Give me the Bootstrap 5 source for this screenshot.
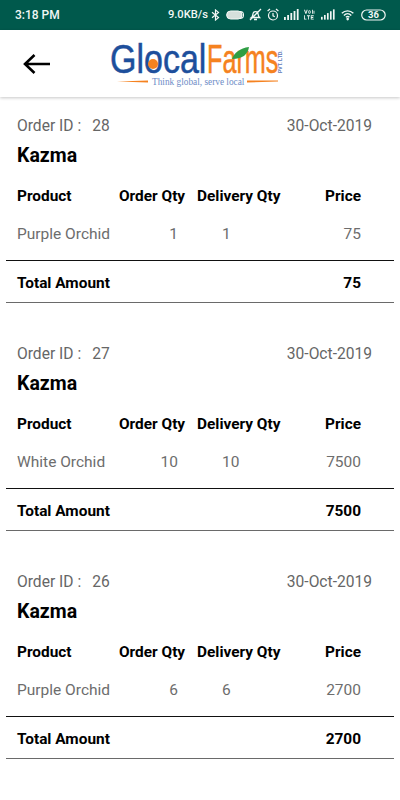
<!doctype html>
<html lang="en"><head><meta charset="utf-8"><meta name="viewport" content="width=device-width,initial-scale=1">
<title>Orders</title>
<link href="https://cdn.jsdelivr.net/npm/bootstrap@5.3.0/dist/css/bootstrap.min.css" rel="stylesheet">
<style>
html,body{height:800px;overflow:hidden;background:#fff}
body{font-family:Roboto,"Liberation Sans",sans-serif;color:#000;width:400px}
.sbar{height:30px;background:#00594c;color:#f2f7f5;font-weight:500;font-size:12px;padding:0 14px 0 15px}
.sbar svg{display:block}
.sicons{gap:5px}
.speed{font-size:11.2px;margin-right:-2px}
.gap6{margin-left:1px}
.topbar{height:67px;background:#fff;box-shadow:0 1px 3px rgba(0,0,0,.22);position:relative}
.backbtn{width:30px;margin-left:22px;margin-top:1px}
.brand{margin-left:57px}
.orderbox{height:228px;padding-top:18px}
.metarow{height:22px;padding:0 28px 0 17px;color:#666;font-size:15.6px;line-height:22px}
.idnum{margin-left:11px}
.placename{font-size:19.5px;font-weight:700;line-height:24px;padding-left:17px;margin-top:7px}
.cols{display:grid;grid-template-columns:102px 67px 11px 84px 80px;padding-left:17px;font-size:15.4px}
.cols>span{white-space:nowrap}
.headcols{font-weight:700;line-height:20px;margin-top:18px}
.valcols{color:#6d6d6d;font-size:15.5px;line-height:22px;margin-top:17px}
.cell-ord{text-align:right;padding-right:8px}
.cell-del{padding-left:25px}
.cell-pr{text-align:right}
.totalrow{margin:15px 6px 0;height:43px;border-top:1px solid #111;border-bottom:1px solid #6a6a6a;font-weight:700;font-size:15.4px;padding:4px 33px 0 11px}
</style></head>
<body>
<div class="sbar d-flex align-items-center justify-content-between">
  <span>3:18 PM</span>
  <div class="sicons d-flex align-items-center">
    <span class="speed">9.0KB/s</span>
    <svg width="9" height="12" viewBox="0 0 9 12" fill="none" stroke="#f2f7f5" stroke-width="1.2"><path d="M1 3.2l6.5 5.4L4.5 11V1l3 2.400L1 8.800"/></svg>
    <svg class="gap6" width="18" height="12" viewBox="0 0 18 12"><rect x=".6" y="2" width="15.500" height="8" rx="4" fill="#d5e0dc" stroke="#f2f7f5"/><path d="M14 2.500c2.500-.3 3.500 1.500 3.500 3.500s-1 3.500-3.500 3.500" stroke="#f2f7f5" stroke-width="1.100" fill="none"/></svg>
    <svg width="13" height="13" viewBox="0 0 13 13" fill="none" stroke="#f2f7f5" stroke-width="1.300"><path d="M2.500 9.500c1.500-1 1-3.500 2-5 1-1.300 3-1.300 4 0 .8 1.200.5 3.500 2 5zM5 11.500h3M1 12L12 1"/></svg>
    <svg width="12" height="13" viewBox="0 0 12 13" fill="none" stroke="#f2f7f5" stroke-width="1.200"><circle cx="6" cy="7.500" r="4.500"/><path d="M6 5v2.800l1.800 1M.6 3L3 1M11.400 3L9 1"/></svg>
    <svg width="15" height="11" viewBox="0 0 15 11" fill="#f2f7f5"><rect x="0" y="8" width="1.800" height="3"/><rect x="3.200" y="6" width="1.800" height="5"/><rect x="6.400" y="4" width="1.800" height="7"/><rect x="9.600" y="2" width="1.800" height="9"/><rect x="12.800" y="0" width="1.800" height="11"/></svg>
    <svg width="11" height="13" viewBox="0 0 13 13" fill="#f2f7f5"><path d="M0 1h1.200l1 3 1-3h1.200l-1.600 4.600H1.600zM5 3.600a1.500 2 0 1 1 3 0 1.500 2 0 1 1-3 0zm1 0a.5 1.200 0 1 0 1 0 .5 1.200 0 1 0-1 0zM9.500 1h1v4.600h-1zM11.300 2h1v3.600h-1zM0 7.500h1v4h2v1H0zM3.500 7.500h3.500v1H5.800v4h-1v-4H3.500zM8 7.500h3.500v1H9v1h2v1H9v1h2.500v1H8z"/></svg>
    <svg class="gap6" width="14" height="11" viewBox="0 0 15 11" fill="#f2f7f5"><rect x="0" y="8" width="1.800" height="3"/><rect x="3.200" y="6" width="1.800" height="5"/><rect x="6.400" y="4" width="1.800" height="7"/><rect x="9.600" y="2" width="1.800" height="9"/><rect x="12.800" y="0" width="1.800" height="11"/></svg>
    <svg class="gap6" width="14" height="12" viewBox="0 0 17 13" fill="none" stroke="#f2f7f5" stroke-width="1.700"><path d="M1 4.500c4-4 10-4 14 0M3.500 7c2.600-2.600 6.400-2.600 9 0M6 9.300c1.200-1.200 3-1.200 4.200 0"/><circle cx="8.100" cy="11.500" r=".7" fill="#f2f7f5"/></svg>
    <svg class="gap6" width="25" height="12" viewBox="0 0 25 12"><rect x=".7" y="1" width="23.500" height="10" rx="5" fill="none" stroke="#f2f7f5" stroke-width="1.200"/><text x="12.500" y="9.300" text-anchor="middle" font-family="Roboto" font-weight="700" font-size="9.500" fill="#f2f7f5">36</text></svg>
  </div>
</div>
<header class="topbar d-flex align-items-center">
  <svg class="backbtn" width="30" height="24" viewBox="0 0 30 24" fill="none" stroke="#000" stroke-width="2.600"><path d="M28 12H3M12.500 3L3 12l9.500 9"/></svg>
  <svg class="brand" width="178" height="67" viewBox="0 -10 178 67" aria-label="GlocalFarms">
    <text transform="translate(1 33) scale(.85 1)" font-family="'Liberation Sans',sans-serif" font-size="40" fill="#1d4f9c" stroke="#1d4f9c" stroke-width=".5">Glocal</text>
    <text transform="translate(98 33) scale(.63 1)" font-family="'Liberation Sans',sans-serif" font-size="40" fill="#f58220" stroke="#f58220" stroke-width=".5">Farms</text>
    <circle cx="44" cy="24" r="5" fill="#f58220"/>
    <path d="M123 19c2-6 8-11 17-12-1 7-6 12-17 12z" fill="#2f9e44"/>
    <text transform="translate(173 33) rotate(-90)" font-family="'Liberation Sans',sans-serif" font-weight="700" font-size="5" fill="#5b78b8">PVT. LTD.</text>
    <path d="M8 41.500l31-1v2z" fill="#f58220"/>
    <text x="43" y="45" font-family="'Liberation Serif',serif" font-size="9.300" fill="#6d8cc6">Think global, serve local</text>
    <path d="M138 40.500h31v1l-31 1z" fill="#f58220"/>
  </svg>
</header>
<main>
  <section class="orderbox">
    <div class="metarow d-flex justify-content-between"><span>Order ID :<span class="idnum">28</span></span><span>30-Oct-2019</span></div>
    <div class="placename">Kazma</div>
    <div class="cols headcols"><span>Product</span><span>Order Qty</span><span></span><span>Delivery Qty</span><span class="cell-pr">Price</span></div>
    <div class="cols valcols"><span>Purple Orchid</span><span class="cell-ord">1</span><span></span><span class="cell-del">1</span><span class="cell-pr">75</span></div>
    <div class="totalrow d-flex align-items-center justify-content-between"><span>Total Amount</span><span>75</span></div>
  </section>
  <section class="orderbox">
    <div class="metarow d-flex justify-content-between"><span>Order ID :<span class="idnum">27</span></span><span>30-Oct-2019</span></div>
    <div class="placename">Kazma</div>
    <div class="cols headcols"><span>Product</span><span>Order Qty</span><span></span><span>Delivery Qty</span><span class="cell-pr">Price</span></div>
    <div class="cols valcols"><span>White Orchid</span><span class="cell-ord">10</span><span></span><span class="cell-del">10</span><span class="cell-pr">7500</span></div>
    <div class="totalrow d-flex align-items-center justify-content-between"><span>Total Amount</span><span>7500</span></div>
  </section>
  <section class="orderbox">
    <div class="metarow d-flex justify-content-between"><span>Order ID :<span class="idnum">26</span></span><span>30-Oct-2019</span></div>
    <div class="placename">Kazma</div>
    <div class="cols headcols"><span>Product</span><span>Order Qty</span><span></span><span>Delivery Qty</span><span class="cell-pr">Price</span></div>
    <div class="cols valcols"><span>Purple Orchid</span><span class="cell-ord">6</span><span></span><span class="cell-del">6</span><span class="cell-pr">2700</span></div>
    <div class="totalrow d-flex align-items-center justify-content-between"><span>Total Amount</span><span>2700</span></div>
  </section>
</main>
<script src="https://cdn.jsdelivr.net/npm/bootstrap@5.3.0/dist/js/bootstrap.bundle.min.js"></script>
</body></html>
